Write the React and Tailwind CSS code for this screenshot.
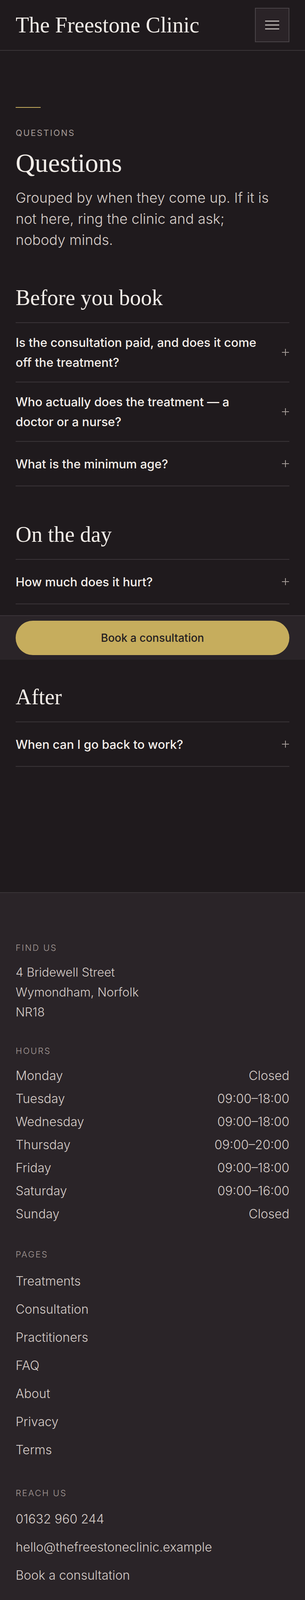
import { useState } from 'react';

const serif = "font-['Liberation_Serif','Times_New_Roman',serif]";
const sans = "font-['Inter','Liberation_Sans',sans-serif]";

const groups = [
  {
    title: 'Before you book',
    items: [
      'Is the consultation paid, and does it come off the treatment?',
      'Who actually does the treatment — a doctor or a nurse?',
      'What is the minimum age?',
    ],
  },
  {
    title: 'On the day',
    items: ['How much does it hurt?'],
  },
];

const after = {
  title: 'After',
  items: ['When can I go back to work?'],
};

const hours = [
  ['Monday', 'Closed'],
  ['Tuesday', '09:00–18:00'],
  ['Wednesday', '09:00–18:00'],
  ['Thursday', '09:00–20:00'],
  ['Friday', '09:00–18:00'],
  ['Saturday', '09:00–16:00'],
  ['Sunday', 'Closed'],
];

const pages = ['Treatments', 'Consultation', 'Practitioners', 'FAQ', 'About', 'Privacy', 'Terms'];

function Plus() {
  return (
    <svg width="20" height="20" viewBox="0 0 20 20" className="shrink-0 text-[#a59d99]" aria-hidden="true">
      <path d="M10 1v18M1 10h18" stroke="currentColor" strokeWidth="2" />
    </svg>
  );
}

function FaqItem({ question }) {
  const [open, setOpen] = useState(false);
  return (
    <div className="border-b-2 border-[#3a3438]">
      <button
        onClick={() => setOpen((v) => !v)}
        aria-expanded={open}
        className="flex min-h-[112px] w-full items-center justify-between gap-8 py-6 text-left"
      >
        <span className="text-[31px] font-medium leading-[51px] text-[#f4efea]">{question}</span>
        <Plus />
      </button>
    </div>
  );
}

function Group({ title, items, className }) {
  return (
    <section className={className}>
      <h2 className={`${serif} text-[56px] leading-[62px] text-[#f2ede8]`}>{title}</h2>
      <div className="mt-8 border-t-2 border-[#3a3438]">
        {items.map((q) => (
          <FaqItem key={q} question={q} />
        ))}
      </div>
    </section>
  );
}

function Eyebrow({ children, className = '' }) {
  return (
    <p className={`text-[22px] uppercase leading-[33px] tracking-[0.12em] text-[#a69c98] ${className}`}>
      {children}
    </p>
  );
}

export default function App() {
  return (
    <div className={`${sans} bg-[#1f1a1d]`}>
      <header className="flex h-[130px] items-center justify-between border-b-2 border-[#3a3438] px-10">
        <span className={`${serif} text-[56px] leading-none text-[#f2ede8]`}>The Freestone Clinic</span>
        <button
          className="flex h-[88px] w-[88px] flex-col items-center justify-center gap-2 border-2 border-[#4a4448] bg-[#2a2327]"
          aria-label="Open menu"
        >
          <span className="h-[2px] w-9 bg-[#f2ede8]" />
          <span className="h-[2px] w-9 bg-[#f2ede8]" />
          <span className="h-[2px] w-9 bg-[#f2ede8]" />
        </button>
      </header>

      <main className="pb-[321px] pt-[144px]">
        <div className="px-10">
          <div className="h-[2px] w-16 bg-[#c6ad5d]" />
          <Eyebrow className="mt-12">Questions</Eyebrow>
          <h1 className={`${serif} mt-[23px] text-[68px] leading-[75px] text-[#f2ede8]`}>Questions</h1>
          <p className="mt-6 whitespace-nowrap text-[36px] font-light leading-[54px] text-[#d8cfca]">
            Grouped by when they come up. If it is
            <br />
            not here, ring the clinic and ask;
            <br />
            nobody minds.
          </p>
          <Group {...groups[0]} className="mt-[90px]" />
          <Group {...groups[1]} className="mt-[92px]" />
        </div>

        <div className="mt-7 border-t-2 border-[#3a3438] bg-[#2a2428] px-10 py-3">
          <button className="flex h-[88px] w-full items-center justify-center rounded-full bg-[#c6ad5d] text-[28px] font-medium text-[#241e21]">
            Book a consultation
          </button>
        </div>

        <div className="px-10">
          <Group {...after} className="mt-16" />
        </div>
      </main>

      <footer className="border-t-2 border-[#3a3438] bg-[#2a2428] px-10 pb-[66px] pt-[124px] font-light text-[#d6cdc8]">
        <Eyebrow>Find us</Eyebrow>
        <address className="mt-5 text-[31px] not-italic leading-[51px]">
          4 Bridewell Street
          <br />
          Wymondham, Norfolk
          <br />
          NR18
        </address>

        <Eyebrow className="mt-[58px]">Hours</Eyebrow>
        <ul className="mt-[23px] flex flex-col gap-[11px] text-[32px] leading-[48px]">
          {hours.map(([day, time]) => (
            <li key={day} className="flex justify-between">
              <span>{day}</span>
              <span>{time}</span>
            </li>
          ))}
        </ul>

        <Eyebrow className="mt-[63px]">Pages</Eyebrow>
        <nav className="mt-7 flex flex-col gap-6 text-[32px] leading-[48px]">
          {pages.map((p) => (
            <a key={p} href="#">
              {p}
            </a>
          ))}
        </nav>

        <Eyebrow className="mt-[70px]">Reach us</Eyebrow>
        <div className="mt-[26px] flex flex-col gap-6 text-[32px] leading-[48px]">
          <a href="#">01632 960 244</a>
          <a href="#">hello@thefreestoneclinic.example</a>
          <a href="#">Book a consultation</a>
        </div>

        <div className="mt-[104px] h-[2px] bg-[#332c30]" />
        <p className="mt-[46px] whitespace-nowrap text-[31px] leading-[52px]">
          This site is information, not a diagnosis. What is
          <br />
          right for you is decided at a consultation.
        </p>
        <p className="mt-[17px] whitespace-nowrap text-[26px] leading-[45px] text-[#a89e9a]">
          The privacy policy and terms on this site are a
          <br />
          template. Replace them before you go live.
        </p>
        <p className="mt-[14px] whitespace-nowrap text-[26px] leading-[45px] text-[#a89e9a]">
          © 2026 The Freestone Clinic. All rights reserved.
        </p>
      </footer>
    </div>
  );
}
